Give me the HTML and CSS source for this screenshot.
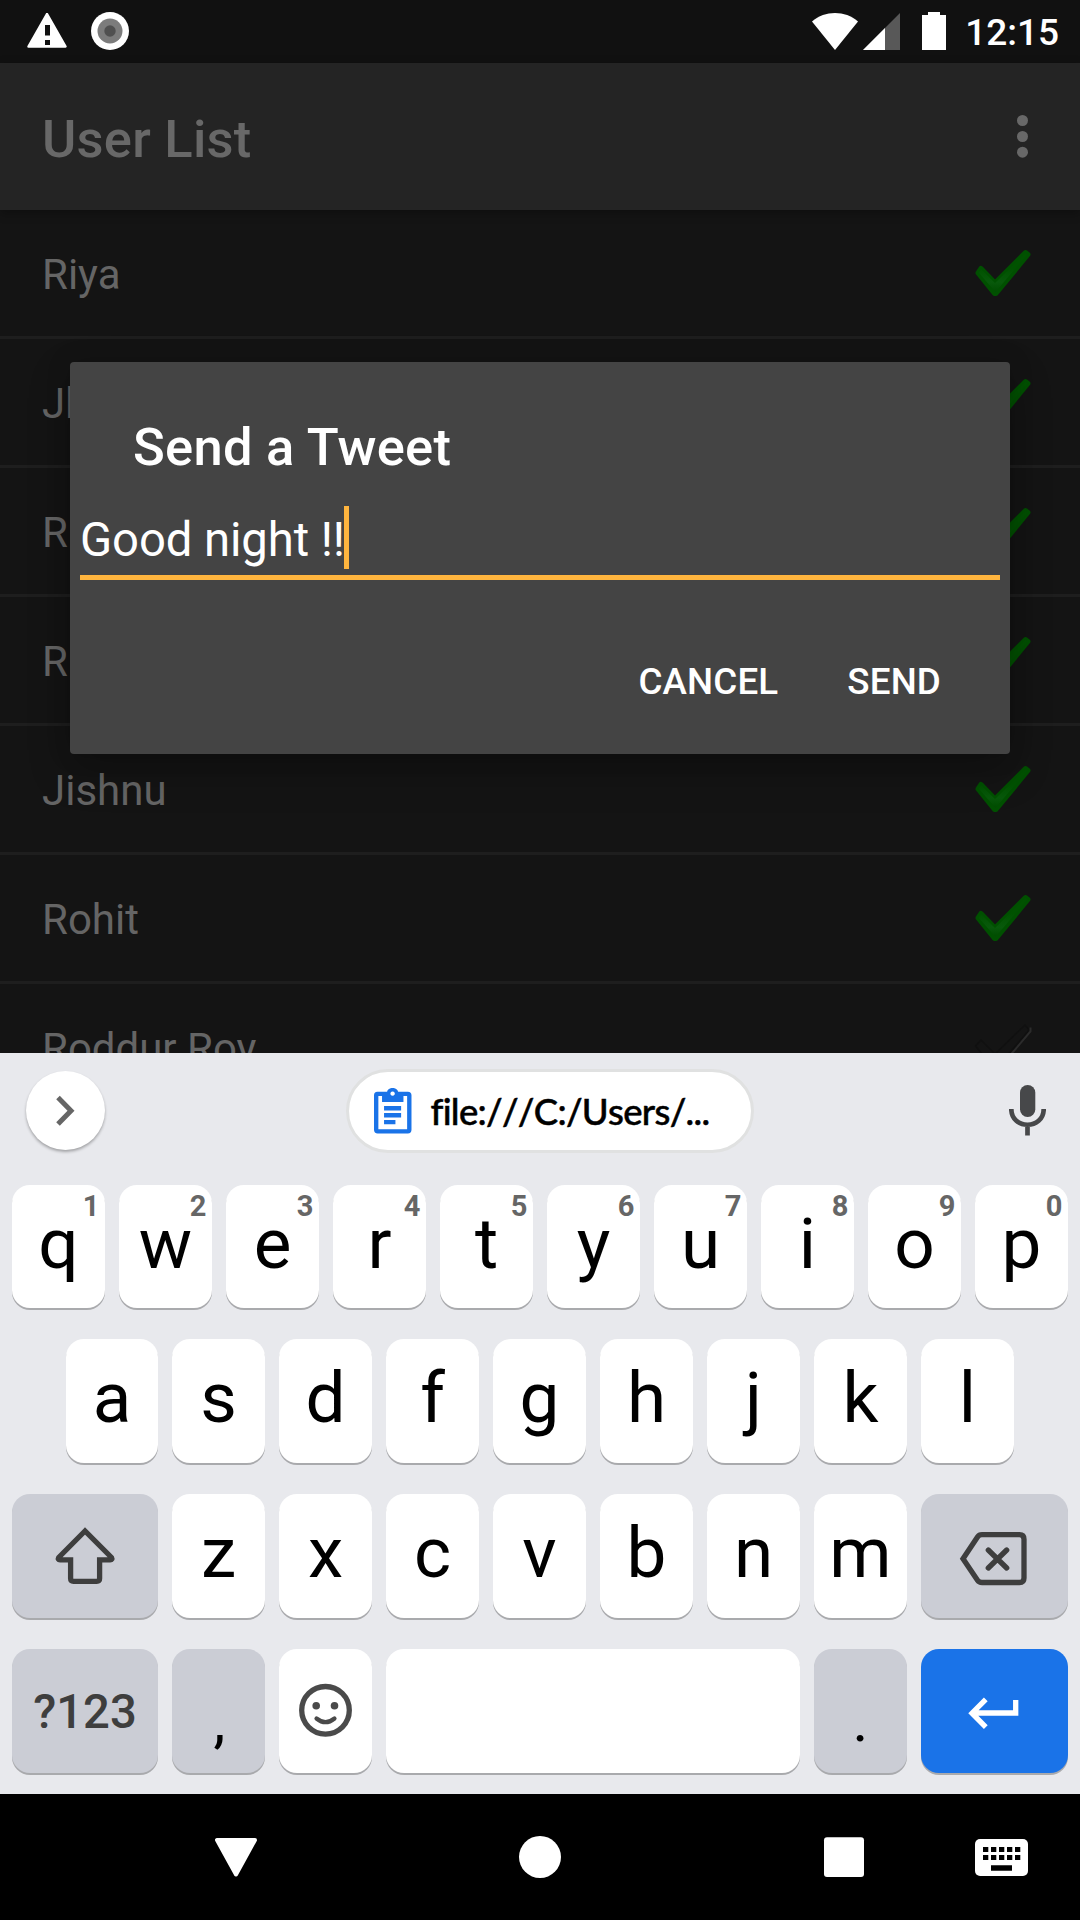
FILE: index.html
```html
<!DOCTYPE html>
<html lang="en">
<head>
<meta charset="utf-8">
<title>User List</title>
<link rel="stylesheet" href="styles.css">
</head>
<body>
<svg class="defs" width="0" height="0">
  <defs>
    <linearGradient id="green" x1="0" y1="0" x2="0" y2="1">
      <stop offset="0.4" stop-color="#005200"/><stop offset="0.75" stop-color="#08590b"/><stop offset="1" stop-color="#004b00"/>
    </linearGradient>
    <symbol id="check" viewBox="0 0 58 50">
      <path d="M7 19.500 L21 34 L51.500 3.500 L54 5.500 L22 44.500 L20.500 44.500 L4 24 Z" fill="url(#green)" stroke="#005000" stroke-width="5" stroke-linejoin="round"/>
      <path d="M7 20 L21 34 L51.500 4 L53 5.500 L21.500 43 L5 24 Z" fill="url(#green)"/>
    </symbol>
  </defs>
</svg>
<div class="screen">
  <header class="status">
    <svg class="warn" width="40" height="36" viewBox="0 0 40 36"><path d="M20 1 L38.500 33.500 H1.500 Z" fill="#fff" stroke="#fff" stroke-width="2.500" stroke-linejoin="round"/><path d="M18 12h5v10.500h-5zM18 27h5v5h-5z" fill="#111"/></svg>
    <svg class="disc" width="38" height="38" viewBox="0 0 38 38"><circle cx="19" cy="19" r="19" fill="#fff"/><circle cx="19" cy="19" r="12.500" fill="#7c7c7c"/><circle cx="19" cy="19" r="5.700" fill="#505050"/></svg>
    <span class="spacer"></span>
    <svg class="wifi" width="46" height="37" viewBox="0 0 46 37"><path d="M0 8.500 C13-2.800 33-2.800 46 8.500 L23 37Z" fill="#fff"/></svg>
    <svg class="signal" width="37" height="37" viewBox="0 0 37 37"><path d="M37 0V37H0Z" fill="#585858"/><path d="M22 15V37H0Z" fill="#fff"/></svg>
    <svg class="battery" width="24" height="38" viewBox="0 0 24 38"><path d="M6 0h12v3h6v35H0V3h6z" fill="#fff"/></svg>
    <span class="time">12:15</span>
  </header>
  <div class="appbar">
    <h1>User List</h1>
    <svg width="11" height="43" viewBox="0 0 11 43" fill="#686868"><circle cx="5.500" cy="5.500" r="5.500"/><circle cx="5.500" cy="21.500" r="5.500"/><circle cx="5.500" cy="37.200" r="5.500"/></svg>
  </div>
  <main class="list">
    <div class="row"><span>Riya</span><svg class="check"><use href="#check"/></svg></div>
    <div class="row"><span>Jhilik</span><svg class="check"><use href="#check"/></svg></div>
    <div class="row"><span>R</span><svg class="check"><use href="#check"/></svg></div>
    <div class="row"><span>R</span><svg class="check"><use href="#check"/></svg></div>
    <div class="row"><span>Jishnu</span><svg class="check"><use href="#check"/></svg></div>
    <div class="row"><span>Rohit</span><svg class="check"><use href="#check"/></svg></div>
    <div class="row"><span>Roddur Roy</span><svg class="check" viewBox="0 0 58 50" fill="none"><path d="M7 17 L1.500 23 L21 47 L55 7 L51 2 L21 31 Z" stroke="#101010" stroke-width="1.500"/><path d="M56.500 4.500 V8.500 L22 49" stroke="#2b2b2b" stroke-width="2"/></svg></div>
  </main>

  <section class="dialog">
    <h2>Send a Tweet</h2>
    <div class="field"><span>Good night !!</span><i class="caret"></i></div>
    <div class="actions"><span>CANCEL</span><span>SEND</span></div>
  </section>

  <section class="keyboard">
    <div class="tools">
      <div class="expand"><svg width="20" height="32" viewBox="0 0 20 32"><path d="M3 2.500 L16 15.700 L3 29" fill="none" stroke="#666" stroke-width="5"/></svg></div>
      <div class="clip">
        <svg width="37.500" height="45.500" viewBox="132 117 112 136"><path fill="#1a73e8" fill-rule="evenodd" d="M142 128H171C174 113 201 113 204 128H233Q244 128 244 139V242Q244 253 233 253H143Q132 253 132 242V139Q132 128 142 128ZM187.500 127.500a6.500 6.500 0 1 0 .1 0ZM145 141V240H231V141H220V159H156V141Z"/><path fill="#1a73e8" d="M162 171h51v13h-51zM162 192h51v13h-51zM162 213h34v12h-34z"/></svg>
        <span>file:///C:/Users/...</span>
      </div>
      <svg class="mic" width="37" height="51" viewBox="0 0 37 51"><rect x="11" y="0" width="15.300" height="32" rx="7.600" fill="#47484a"/><path d="M2.300 24 C2.300 45 34.700 45 34.700 24 M18.500 39V50.500" fill="none" stroke="#47484a" stroke-width="4.700"/></svg>
    </div>
    <div class="keys r1">
      <div class="key">q<sup>1</sup></div><div class="key">w<sup>2</sup></div><div class="key">e<sup>3</sup></div><div class="key">r<sup>4</sup></div><div class="key">t<sup>5</sup></div><div class="key">y<sup>6</sup></div><div class="key">u<sup>7</sup></div><div class="key">i<sup>8</sup></div><div class="key">o<sup>9</sup></div><div class="key">p<sup>0</sup></div>
    </div>
    <div class="keys r2">
      <div class="key">a</div><div class="key">s</div><div class="key">d</div><div class="key">f</div><div class="key">g</div><div class="key">h</div><div class="key">j</div><div class="key">k</div><div class="key">l</div>
    </div>
    <div class="keys r3">
      <div class="key gray icon"><svg viewBox="12 1494 146 124"><path d="M85 1531 L58.700 1557.500 Q57.500 1559.800 60 1559.800 H70.600 V1578.500 Q70.600 1581.300 73.500 1581.300 H96.700 Q99.600 1581.300 99.600 1578.500 V1559.800 H110.200 Q112.700 1559.800 111.500 1557.500 Z"/></svg></div>
      <div class="key">z</div><div class="key">x</div><div class="key">c</div><div class="key">v</div><div class="key">b</div><div class="key">n</div><div class="key">m</div>
      <div class="key gray icon"><svg viewBox="921 1494 147 124"><path d="M963 1558.800 L977.500 1537 Q979 1534.700 982 1534.700 H1019.500 Q1024 1534.700 1024 1539.200 V1578 Q1024 1582.500 1019.500 1582.500 H982 Q979 1582.500 977.500 1580.300 Z M988.300 1550 L1006.700 1568 M1006.700 1550 L988.300 1568" stroke-linecap="round"/></svg></div>
    </div>
    <div class="keys r4">
      <div class="key gray mode">?123</div><div class="key gray punct comma">,</div>
      <div class="key icon"><svg viewBox="279 1649 93 124"><g stroke="#4a4a4a"><circle cx="325.500" cy="1710.300" r="23.800"/><path d="M316.500 1718.500 Q325.500 1725.800 334.500 1718.500" stroke-width="4.200" stroke-linecap="round"/></g><circle cx="316.200" cy="1705.700" r="3.800" fill="#4a4a4a" stroke="none"/><circle cx="334.500" cy="1705.700" r="3.800" fill="#4a4a4a" stroke="none"/></svg></div>
      <div class="key"></div><div class="key gray punct">.</div>
      <div class="key enter icon"><svg viewBox="921 1649 147 124"><path stroke="#fff" d="M1015.700 1700 V1713 H973 M985.800 1699.300 L972 1713.200 L985.800 1727.100"/></svg></div>
    </div>
  </section>

  <nav class="nav">
    <svg viewBox="0 1794 1080 126" fill="#fff" stroke="#fff"><path d="M217 1840 H255 L236 1874.500 Z" stroke-width="4" stroke-linejoin="round"/><circle cx="540" cy="1857" r="21" stroke="none"/><rect x="824" y="1837.300" width="40" height="39.700" rx="3" stroke="none"/><rect x="975" y="1839" width="53" height="37" rx="5" stroke="none"/><path stroke="#000" stroke-width="5" stroke-dasharray="5.300 2.700" d="M983 1849.500 H1020.500 M983 1857.500 H1020.500"/><path stroke="#000" stroke-width="5.500" d="M991 1868 H1012"/></svg>
  </nav>
</div>
</body>
</html>
```
FILE: styles.css
```css
* { box-sizing: border-box; }
body { margin: 0; background: #141414; font-family: Roboto, sans-serif; }
h1, h2 { margin: 0; font-weight: 500; font-size: 52.5px; line-height: 60px; letter-spacing: 0.25px; }
svg { display: block; flex: none; }
.defs { position: absolute; }
.screen { position: relative; width: 1080px; height: 1920px; overflow: hidden; display: flex; flex-direction: column; }

.status { height: 63px; background: #111; display: flex; align-items: flex-start; padding: 0 21px 0 27px; }
.warn { margin-top: 13px; }
.disc { margin: 12px 0 0 24px; }
.spacer { flex: 1; }
.wifi, .signal { margin-top: 13px; }
.signal { margin-left: 5px; }
.battery { margin: 12px 0 0 22px; }
.time { color: #fff; font-size: 37px; font-weight: 500; line-height: 44px; margin: 11px 0 0 19px; }

.appbar { height: 147px; background: #242424; color: #686868; display: flex; align-items: center; justify-content: space-between; padding: 0 52px 0 42px; box-shadow: 0 3px 10px rgba(0, 0, 0, .3); position: relative; }
.appbar h1 { padding-top: 4px; }

.list { height: 843px; overflow: hidden; background: #141414; }
.row { height: 129px; border-bottom: 3px solid #1e1e1e; display: flex; align-items: center; justify-content: space-between; padding: 0 48px 0 42px; color: #656565; font-size: 42px; line-height: 50px; }
.row span { padding-top: 4px; }
.check { width: 58px; height: 50px; margin-top: 2px; }

.dialog { position: absolute; left: 70px; top: 362px; width: 940px; height: 392px; background: #444; color: #fff; border-radius: 4px; box-shadow: 0 16px 40px rgba(0, 0, 0, .25), 0 0 24px rgba(0, 0, 0, .15); padding: 55px 10px 0; }
.dialog h2 { padding-left: 53px; }
.field { margin-top: 24px; height: 79px; border-bottom: 5px solid #ffb53e; font-size: 47.25px; line-height: 56px; letter-spacing: -0.1px; display: flex; align-items: center; }
.field span { padding-top: 3px; }
.caret { width: 5px; height: 63px; margin: -1px 0 0 -1px; background: #ffb53e; }
.actions { display: flex; justify-content: flex-end; gap: 69px; padding-right: 59px; margin-top: 80px; font-size: 36.75px; font-weight: 500; line-height: 44px; letter-spacing: 0.15px; }

.keyboard { height: 741px; background: #e8e9ed; padding: 0 12px; }
.tools { height: 132px; display: flex; justify-content: space-between; padding: 16px 22px 0 14px; }
.expand { width: 79px; height: 79px; margin-top: 2px; padding-right: 2px; border-radius: 50%; background: #fff; box-shadow: 0 2px 3px rgba(0, 0, 0, .3); display: flex; align-items: center; justify-content: center; }
.clip { width: 408px; height: 84px; margin-left: -14px; border: 3px solid #e0e1e1; border-radius: 42px; background: #fff; display: flex; align-items: center; padding-left: 25px; gap: 19px; }
.clip span { font-family: Lato, sans-serif; font-weight: 500; font-kerning: none; font-size: 36.5px; line-height: 44px; letter-spacing: -0.7px; -webkit-text-stroke: 0.5px #000; color: #000; white-space: nowrap; }
.mic { margin-top: 16px; }

.keys { display: grid; grid-template-columns: repeat(10, 93px); gap: 14px; height: 124px; margin-bottom: 31px; }
.r1 { height: 123px; }
.r2 { grid-template-columns: 92px repeat(8, 93px); padding-left: 54px; }
.r3 { grid-template-columns: 146px repeat(7, 93px) 147px; }
.r4 { grid-template-columns: 146px 93px 93px 414px 93px 147px; margin-bottom: 0; }
.key { position: relative; background: #fff; border-radius: 18px; box-shadow: 0 2px 0 #a9aaad; font-size: 71px; line-height: 84px; color: #000; display: flex; align-items: center; justify-content: center; padding-bottom: 6px; }
.key sup { position: absolute; right: 5.5px; top: 4px; font-size: 29px; line-height: 34px; font-weight: 700; color: #666; }
.gray { background: #cbcdd5; }
.mode { font-size: 47.25px; font-weight: 500; color: #3e3e3e; padding: 2px 0 0; }
.punct { font-size: 60px; padding: 19px 0 0; }
.comma { padding-left: 2px; }
.enter { background: #1a73e8; }
.icon { padding: 0; }
.icon svg { width: 100%; height: 100%; fill: none; stroke: #3e3e3e; stroke-width: 5.3; }

.nav { height: 126px; background: #000; }
.nav svg { width: 1080px; height: 126px; }
```
